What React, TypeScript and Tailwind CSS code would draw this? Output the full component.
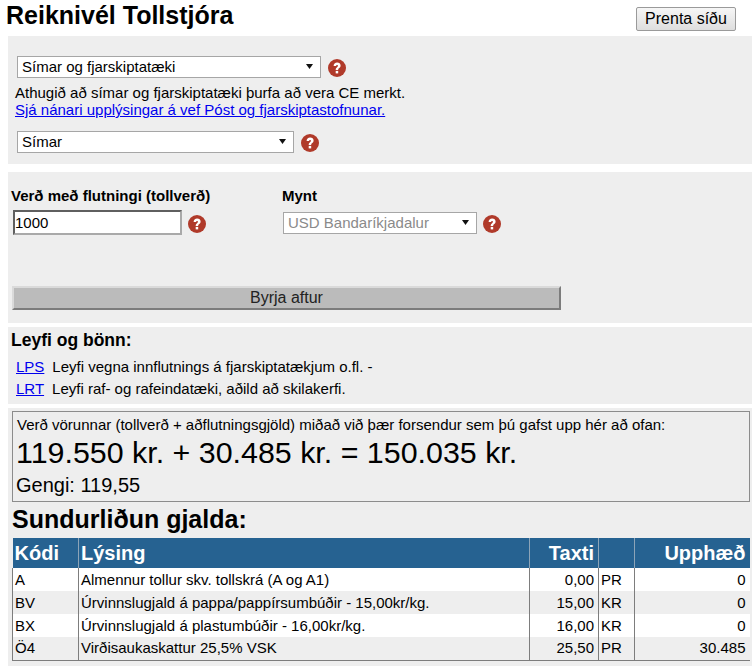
import React from "react";

function Help() {
  return (
    <svg width="18" height="18" viewBox="0 0 18 18" className="shrink-0 mt-[2px]">
      <circle cx="9" cy="9" r="9" fill="#b03a2a" />
      <path d="M5.6 7 C5.6 4.8 7.1 3.6 9.1 3.6 C11.2 3.6 12.6 4.8 12.6 6.6 C12.6 8 11.8 8.7 11 9.3 C10.4 9.7 10.2 10.1 10.2 11 L7.7 11 C7.7 9.6 8 9 8.8 8.4 C9.6 7.8 10 7.4 10 6.8 C10 6.2 9.7 5.9 9.1 5.9 C8.5 5.9 8.1 6.3 8.1 7 Z" fill="#fff" />
      <rect x="7.7" y="11.9" width="2.5" height="2.5" fill="#fff" />
    </svg>
  );
}

function Select({ label, w, muted }: { label: string; w: string; muted?: boolean }) {
  return (
    <div className={`relative h-[22px] ${w}`}>
      <select
        defaultValue={label}
        className={`appearance-none w-full h-full bg-white border border-[#a6a6a6] pl-[4px] text-[15px] leading-[20px] outline-none ${muted ? "text-[#8a8a8a]" : "text-black"}`}
      >
        <option>{label}</option>
      </select>
      <svg width="7" height="5" viewBox="0 0 7 5" className="absolute right-[8px] top-[8px]">
        <path d="M0 0H7L3.5 5Z" fill="#111" />
      </svg>
    </div>
  );
}

const rows = [
  ["A", "Almennur tollur skv. tollskrá (A og A1)", "0,00", "PR", "0"],
  ["BV", "Úrvinnslugjald á pappa/pappírsumbúðir - 15,00kr/kg.", "15,00", "KR", "0"],
  ["BX", "Úrvinnslugjald á plastumbúðir - 16,00kr/kg.", "16,00", "KR", "0"],
  ["Ö4", "Virðisaukaskattur 25,5% VSK", "25,50", "PR", "30.485"],
];

export default function App() {
  return (
    <div className="w-[754px] h-[666px] overflow-hidden bg-white text-black font-['Liberation_Sans',Arial,sans-serif] text-[15px]">
      <div className="flex justify-between items-start h-[36px]">
        <h1 className="ml-[6px] text-[25px] leading-[30px] font-bold">Reiknivél Tollstjóra</h1>
        <button className="mt-[7px] mr-[18px] w-[100px] h-[24px] rounded-[2px] border border-[#9a9a9a] bg-gradient-to-b from-[#f6f6f6] to-[#dedede] text-[16px] leading-[20px] text-black">
          Prenta síðu
        </button>
      </div>

      <section className="ml-[8px] w-[744px] h-[128px] bg-[#eeeeee] pt-[20px] pl-[7px]">
        <div className="flex items-center gap-[7px] ml-[2px]">
          <Select label="Símar og fjarskiptatæki" w="w-[304px]" />
          <Help />
        </div>
        <p className="mt-[6px] leading-[17px]">Athugið að símar og fjarskiptatæki þurfa að vera CE merkt.</p>
        <a className="block leading-[17px] text-[#0000ee] underline">Sjá nánari upplýsingar á vef Póst og fjarskiptastofnunar.</a>
        <div className="flex items-center gap-[7px] ml-[2px] mt-[13px]">
          <Select label="Símar" w="w-[277px]" />
          <Help />
        </div>
      </section>

      <section className="ml-[8px] mt-[8px] w-[744px] h-[151px] bg-[#eeeeee] pl-[3px] pt-[16px]">
        <div className="flex">
          <div className="w-[270px]">
            <label className="block font-bold leading-[16px]">Verð með flutningi (tollverð)</label>
            <div className="flex items-center gap-[6px] mt-[6px] ml-[2px]">
              <input
                defaultValue="1000"
                className="w-[169px] h-[25px] bg-white border-2 border-t-[#5f5f5f] border-l-[#5f5f5f] border-r-[#a9a9a9] border-b-[#a9a9a9] pl-0 text-[15px] font-['Liberation_Sans',Arial,sans-serif] outline-none"
              />
              <Help />
            </div>
          </div>
          <div>
            <label className="block font-bold leading-[16px] ml-[1px]">Mynt</label>
            <div className="flex items-center gap-[6px] mt-[8px] ml-[2px]">
              <Select label="USD Bandaríkjadalur" w="w-[194px]" muted />
              <Help />
            </div>
          </div>
        </div>
        <button className="block mt-[51px] ml-[1px] w-[549px] h-[24px] bg-[#bbbbbb] border-2 border-t-[#dadada] border-l-[#dadada] border-r-[#7c7c7c] border-b-[#7c7c7c] text-[16px] leading-[18px] text-[#222]">
          Byrja aftur
        </button>
      </section>

      <section className="ml-[8px] mt-[4px] w-[744px] h-[77px] bg-[#eeeeee] pl-[3px] pt-[3px]">
        <h3 className="font-bold text-[17.5px] leading-[21px]">Leyfi og bönn:</h3>
        <div className="mt-[7px] flex flex-col gap-[5px] pl-[5px]">
          <div className="flex gap-[8px] leading-[17px]">
            <a className="text-[#0000ee] underline">LPS</a>
            <span>Leyfi vegna innflutnings á fjarskiptatækjum o.fl. -</span>
          </div>
          <div className="flex gap-[8px] leading-[17px]">
            <a className="text-[#0000ee] underline">LRT</a>
            <span>Leyfi raf- og rafeindatæki, aðild að skilakerfi.</span>
          </div>
        </div>
      </section>

      <section className="ml-[8px] mt-[4px] w-[744px] h-[260px] bg-[#eeeeee] pl-[4px] pt-[3px]">
        <div className="w-[738px] h-[91px] border border-[#8c8c8c] pl-[3px] pt-[4px]">
          <p className="leading-[17px] ml-[1px]">Verð vörunnar (tollverð + aðflutningsgjöld) miðað við þær forsendur sem þú gafst upp hér að ofan:</p>
          <p className="text-[30.4px] leading-[34px] mt-[2px]">119.550 kr. + 30.485 kr. = 150.035 kr.</p>
          <p className="text-[20px] leading-[22px] mt-[5px]">Gengi: 119,55</p>
        </div>
        <h2 className="font-bold text-[25px] leading-[28px] mt-[3px]">Sundurliðun gjalda:</h2>
        <table className="mt-[5px] w-[737px] table-fixed border-collapse border-b border-[#7d7d7d] text-[15px]">
          <colgroup>
            <col className="w-[66px]" />
            <col className="w-[451px]" />
            <col className="w-[69px]" />
            <col className="w-[36px]" />
            <col className="w-[115px]" />
          </colgroup>
          <thead>
            <tr className="h-[30px] bg-[#266291] text-white text-[20px] font-bold">
              <th className="px-[2px] text-left leading-[24px] border-r border-[#8ca4b8]">Kódi</th>
              <th className="px-[2px] text-left leading-[24px] border-r border-[#8ca4b8]">Lýsing</th>
              <th className="px-[4px] text-right leading-[24px] border-r border-[#8ca4b8]">Taxti</th>
              <th className="border-r border-[#8ca4b8]"></th>
              <th className="px-[4px] text-right leading-[24px]">Upphæð</th>
            </tr>
          </thead>
          <tbody>
            {rows.map((r, i) => (
              <tr key={r[0]} className={`h-[23px] ${i % 2 === 0 ? "bg-white" : "bg-[#eeeeee]"}`}>
                <td className="px-[2px] leading-[16px] border-x border-[#7d7d7d]">{r[0]}</td>
                <td className="px-[2px] leading-[16px] border-r border-[#7d7d7d]">{r[1]}</td>
                <td className="px-[4px] text-right leading-[16px] border-r border-[#7d7d7d]">{r[2]}</td>
                <td className="px-[2px] leading-[16px] border-r border-[#7d7d7d]">{r[3]}</td>
                <td className="px-[4px] text-right leading-[16px]">{r[4]}</td>
              </tr>
            ))}
          </tbody>
        </table>
      </section>
    </div>
  );
}
